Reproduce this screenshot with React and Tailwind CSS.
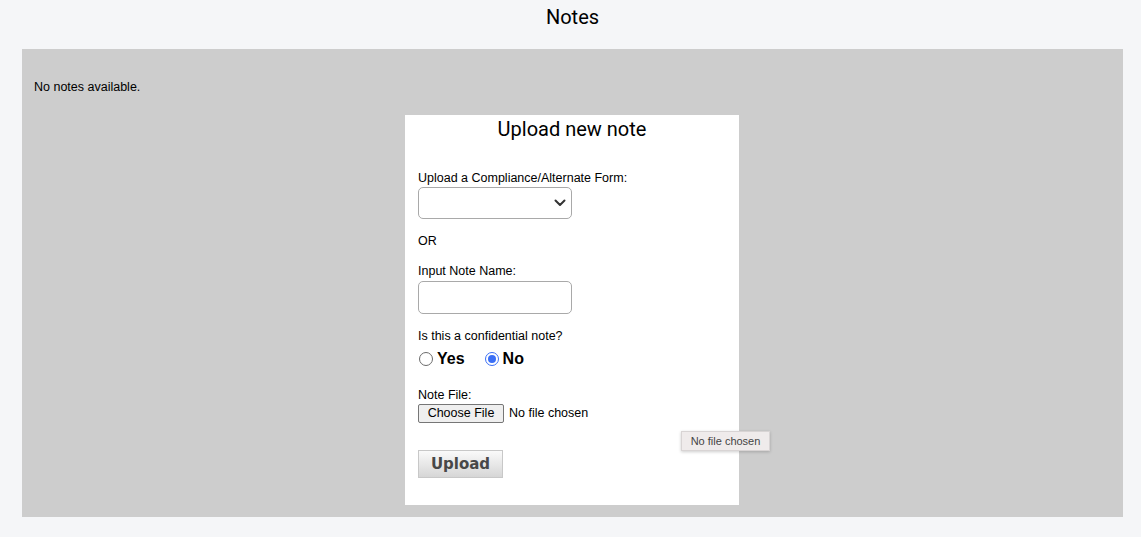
export default function App() {
  return (
    <div className="relative min-h-[537px] w-[1141px] bg-[#f5f6f8] text-black" style={{ fontFamily: '"Liberation Sans", Arial, sans-serif' }}>
      {/* Header */}
      <div className="flex h-[33px] items-center justify-center pl-[4px] text-[20px]" style={{ fontFamily: 'Roboto, sans-serif' }}>Notes</div>

      {/* Gray panel */}
      <div className="ml-[22px] mr-[18px] mt-[16px] bg-[#cdcdcd] pb-[12px] pr-[1px] pt-[31px]">
        <p className="px-[12px] text-[12.5px] leading-[14px]">No notes available.</p>

        <div className="mx-auto mt-[21px] w-[334px] bg-white px-[13px] pb-[27px] pt-[2px]">
          <h2 className="text-center text-[20px] leading-[24px]" style={{ fontFamily: 'Roboto, sans-serif' }}>Upload new note</h2>

          <label className="mt-[30px] block text-[12.5px] leading-[14px]">Upload a Compliance/Alternate Form:</label>
          <div className="mt-[2px] flex h-[32px] w-[154px] items-center justify-end rounded-[5px] border border-[#a9a9a9] bg-white pr-[5px]">
            <svg width="12" height="8" viewBox="0 0 12 8" fill="none">
              <path d="M1.5 1.5 L6 6 L10.5 1.5" stroke="#333" strokeWidth="2" strokeLinecap="round" strokeLinejoin="round" />
            </svg>
          </div>

          <p className="mt-[15px] text-[12.5px] leading-[14px]">OR</p>

          <label className="mt-[16px] block text-[12.5px] leading-[14px]">Input Note Name:</label>
          <div className="mt-[3px] h-[33px] w-[154px] rounded-[5px] border border-[#a9a9a9] bg-white" />

          <p className="mt-[15px] text-[12.5px] leading-[14px]">Is this a confidential note?</p>
          <div className="mt-[6px] flex h-[19px] items-center text-[16px] font-bold">
            <span className="ml-[1px] box-border h-[14px] w-[14px] rounded-full border border-[#6b6b6b] bg-white" />
            <span className="ml-[4px]">Yes</span>
            <span className="ml-[20px] flex h-[14px] w-[14px] items-center justify-center rounded-full border-[1.5px] border-[#3b6ff5] bg-white">
              <span className="h-[8px] w-[8px] rounded-full bg-[#3b6ff5]" />
            </span>
            <span className="ml-[4px]">No</span>
          </div>

          <label className="mt-[20px] block text-[12.5px] leading-[14px]">Note File:</label>
          <div className="mt-[2px] flex items-center text-[12.5px]">
            <span className="flex h-[19px] w-[86px] items-center justify-center rounded-[2px] border border-[#767676] bg-[#efefef]">Choose File</span>
            <span className="ml-[5px]">No file chosen</span>
          </div>

          <button
            className="mt-[27px] flex h-[28px] w-[85px] items-center justify-center border border-[#c8c8c8] bg-gradient-to-b from-[#fafafa] to-[#d6d6d6] text-[15px] font-bold text-[#484848]"
            style={{ fontFamily: '"DejaVu Sans", Verdana, sans-serif' }}
          >
            Upload
          </button>
        </div>
      </div>

      {/* Tooltip */}
      <div className="absolute left-[681px] top-[431px] flex h-[20px] w-[89px] items-center justify-center border border-[#d8d4d4] bg-[#efebeb] text-[11px] text-[#444] shadow-[0_1px_3px_rgba(0,0,0,0.2)]">
        No file chosen
      </div>
    </div>
  );
}
